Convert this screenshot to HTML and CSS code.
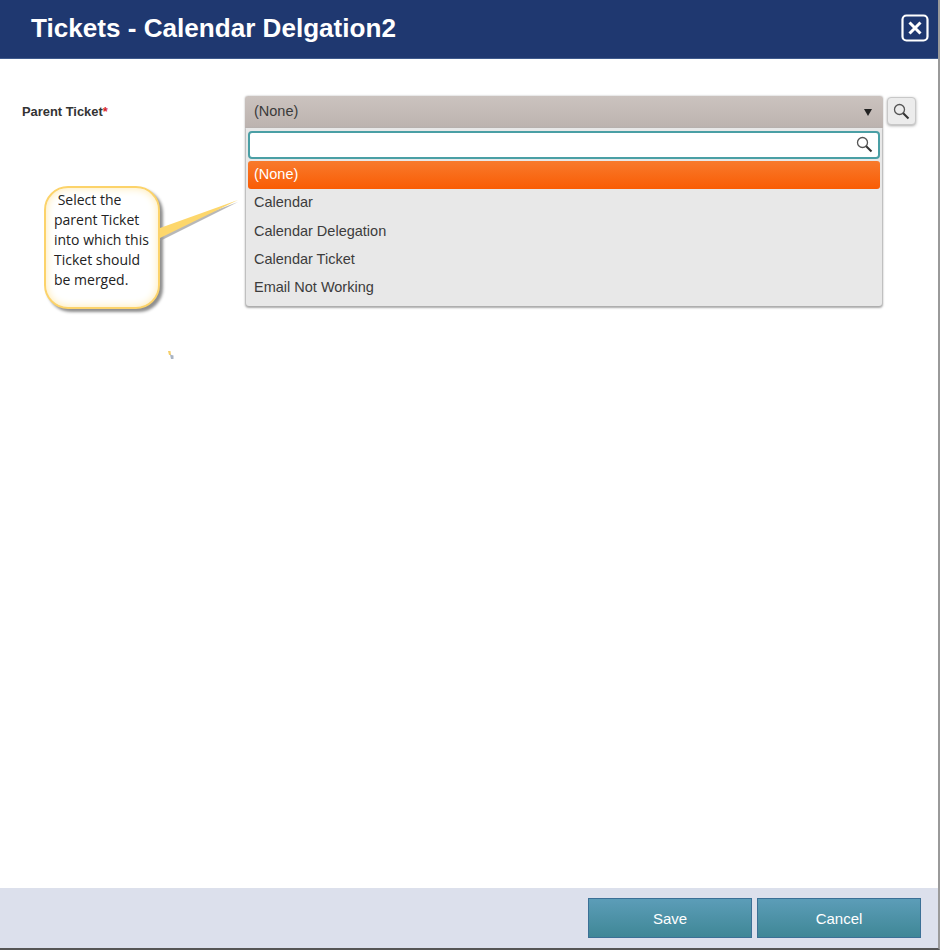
FILE: index.html
```html
<!DOCTYPE html>
<html>

<head>
    <meta name="viewport" content="width=device-width, initial-scale=1">
    <title>Tickets - Calendar Delgation2</title>

    <link rel="stylesheet" href="styles.css">
</head>

<body>
    <div class="dialog">
        <header class="titlebar">
            <h1>Tickets - Calendar Delgation2</h1>
            <button class="close" aria-label="Close">
                <svg width="28" height="28" viewBox="0 0 28 28">
                    <rect x="1.5" y="1.5" width="25" height="25" rx="4" fill="none" stroke="#fff" stroke-width="2.2" />
                    <path d="M8.5 8.5 L19.5 19.5 M19.5 8.5 L8.5 19.5" stroke="#fff" stroke-width="3" />
                </svg>
            </button>
        </header>

        <main class="content">
            <div class="field">
                <label class="field-label">Parent Ticket<span class="req">*</span></label>
                <div class="picker">
                    <div class="select">
                        <span>(None)</span>
                        <span class="arrow"></span>
                    </div>
                    <div class="menu">
                        <div class="menu-search">
                            <input type="text">
                            <svg class="glass" width="17" height="17" viewBox="0 0 17 17">
                                <circle cx="6.5" cy="6.5" r="5" fill="none" stroke="#555" stroke-width="1.3" />
                                <path d="M10.2 10.2 L15.5 15.5" stroke="#333" stroke-width="2" />
                            </svg>
                        </div>
                        <ul class="options">
                            <li class="selected">(None)</li>
                            <li>Calendar</li>
                            <li>Calendar Delegation</li>
                            <li>Calendar Ticket</li>
                            <li>Email Not Working</li>
                        </ul>
                    </div>
                </div>
                <button class="lookup" aria-label="Search">
                    <svg width="17" height="17" viewBox="0 0 17 17">
                        <circle cx="6.5" cy="6.5" r="5" fill="none" stroke="#555" stroke-width="1.3" />
                        <path d="M10.2 10.2 L15.5 15.5" stroke="#333" stroke-width="2" />
                    </svg>
                </button>
            </div>

            <!-- help callout sits on top of the form -->
            <div class="callout">
                <svg class="callout-tail" width="82" height="44" viewBox="0 0 82 44">
                    <path d="M0 31 L78 2 L0 41 Z" fill="#9a9a9a" opacity="0.7" />
                    <path d="M0 28 L78 0 L0 38 Z" fill="#fdd76c" />
                </svg>
                <p> &nbsp;Select the<br>parent Ticket<br>into which this<br>Ticket should<br>be merged.</p>
            </div>
            <svg class="speck" width="6" height="8" viewBox="0 0 6 8">
                <path d="M0 0 L2.5 0 L3 4 L1 4 Z" fill="#f5cf6a" />
                <path d="M2 3.5 L5.5 4.5 L5.5 8 L3 8 Z" fill="#a9b4c4" />
            </svg>
        </main>

        <footer class="actions">
            <button class="btn">Save</button>
            <button class="btn">Cancel</button>
        </footer>
    </div>
</body>

</html>
```

FILE: styles.css
```css
* {
    box-sizing: border-box;
}

html,
body {
    margin: 0;
    height: 950px;
    overflow: hidden;
    background-color: #fff;
    font-family: "Liberation Sans", Arial, sans-serif;
}

.dialog {
    display: flex;
    flex-direction: column;
    width: 940px;
    height: 950px;
    border-right: 2px solid #9a9a9a;
    border-bottom: 2px solid #555;
}

.titlebar {
    display: flex;
    align-items: center;
    justify-content: space-between;
    height: 59px;
    padding: 0 9px 2px 31px;
    background-color: #1f3870;
    border-bottom: 1px solid #3f5a8c;
}

.titlebar h1 {
    margin: 0;
    font-size: 26.1px;
    font-weight: bold;
    color: #fff;
}

.close {
    display: flex;
    padding: 0;
    background: none;
    border: none;
}

.content {
    position: relative;
    flex: 1;
    padding: 37px 22px 0 22px;
}

.field {
    display: flex;
    align-items: flex-start;
}

.field-label {
    width: 223px;
    padding-top: 8px;
    font-size: 12.9px;
    font-weight: bold;
    color: #333;
}

.req {
    color: #d8232a;
}

.picker {
    width: 638px;
}

.select {
    display: flex;
    align-items: center;
    justify-content: space-between;
    height: 32px;
    padding: 0 11px 2px 9px;
    border-radius: 3px 3px 0 0;
    background: linear-gradient(#cbc3bf, #bcb3af);
    box-shadow: 0 0 2px #aaa;
    font-size: 14.5px;
    color: #3a3a3a;
}

.arrow {
    width: 0;
    height: 0;
    margin-top: 2px;
    border-left: 4.5px solid transparent;
    border-right: 4.5px solid transparent;
    border-top: 7px solid #222;
}

.menu {
    display: flex;
    flex-direction: column;
    height: 178px;
    margin: 0 1px;
    padding: 3px 2px 0 2px;
    background-color: #e8e8e8;
    border-radius: 0 0 3px 3px;
    box-shadow: 0 1px 2px 1px #aaa;
}

.menu-search {
    position: relative;
    height: 28px;
}

.menu-search input {
    display: block;
    width: 100%;
    height: 100%;
    background-color: #fff;
    border: 2px solid #4a9fa5;
    border-radius: 4px;
}

.glass {
    position: absolute;
    top: 5px;
    right: 7px;
}

.options {
    margin: 2px 0 0 0;
    padding: 0;
    list-style: none;
}

.options li {
    height: 28.3px;
    padding: 0 6px;
    font-size: 14.5px;
    line-height: 26.5px;
    color: #3c3c3c;
}

.options li.selected {
    background: linear-gradient(#f87a2c, #f95c04);
    border-radius: 3px;
    color: #fff;
}

.lookup {
    display: flex;
    align-items: center;
    justify-content: center;
    width: 29px;
    height: 28px;
    margin: 1px 0 0 4px;
    padding: 0;
    background-color: #ececec;
    border: 1px solid #c8c8c8;
    border-radius: 4px;
    box-shadow: 0 1px 3px #aaa;
}

.callout {
    position: absolute;
    top: 127px;
    left: 44px;
    width: 116px;
    height: 123px;
    padding: 2px 0 0 8px;
    background-color: #fff;
    border: 2px solid #fcd36a;
    border-radius: 24px;
    box-shadow: 3px 3px 3px #8f8f8f, inset 0 0 9px #ffe9ad;
}

.callout p {
    margin: 0;
    font-family: "Open Sans", sans-serif;
    font-size: 14px;
    line-height: 20px;
    color: #222;
    white-space: nowrap;
}

.callout-tail {
    position: absolute;
    top: 12px;
    left: 114px;
}

.speck {
    position: absolute;
    top: 292px;
    left: 168px;
}

.actions {
    display: flex;
    align-items: center;
    justify-content: flex-end;
    gap: 5px;
    height: 60px;
    padding: 0 17px 0 0;
    background-color: #dce0ec;
}

.btn {
    width: 164px;
    height: 40px;
    background: linear-gradient(#5c9db8, #3f8796);
    border: 1px solid #3b7096;
    font-family: inherit;
    font-size: 15px;
    color: #fff;
}
```
